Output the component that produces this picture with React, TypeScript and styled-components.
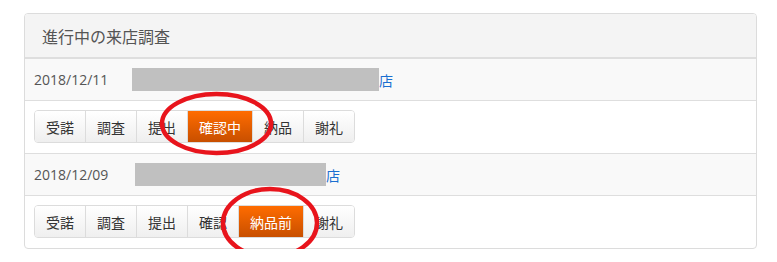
import React from "react";
import styled, { createGlobalStyle, css } from "styled-components";

const GlobalStyle = createGlobalStyle`
  body {
    margin: 0;
    background: #fff;
    font-family: "Open Sans", "Noto Sans CJK JP", sans-serif;
  }
`;

interface Visit {
  date: string;
  nameOffset: number;
  nameWidth: number;
  steps: string[];
  current: number;
  mark: { left: number; top: number; width: number; height: number };
}

const visits: Visit[] = [
  {
    date: "2018/12/11",
    nameOffset: 24,
    nameWidth: 247,
    steps: ["受諾", "調査", "提出", "確認中", "納品", "謝礼"],
    current: 3,
    mark: { left: 160, top: 92, width: 113, height: 63 },
  },
  {
    date: "2018/12/09",
    nameOffset: 27,
    nameWidth: 191,
    steps: ["受諾", "調査", "提出", "確認", "納品前", "謝礼"],
    current: 4,
    mark: { left: 221, top: 187, width: 98, height: 72 },
  },
];

const Page = styled.div`
  position: relative;
  padding: 13px 20px 0 24px;
`;

const Panel = styled.section`
  width: 731px;
  border: 1px solid #dcdcdc;
  border-radius: 4px;
  overflow: hidden;
`;

const Header = styled.h2`
  margin: 0;
  height: 43px;
  padding-left: 17px;
  display: flex;
  align-items: center;
  background: #f4f4f4;
  border-bottom: 2px solid #dedede;
  color: #555;
  font-size: 16px;
  font-weight: 400;
`;

const VisitHead = styled.div`
  height: 41px;
  display: flex;
  align-items: center;
  padding-left: 9px;
  background: #f9f9f9;
  border-bottom: 1px solid #dedede;
  font-size: 14px;
`;

const DateText = styled.span`
  color: #555;
  width: 74px;
`;

const Redacted = styled.span`
  display: inline-block;
  height: 23px;
  background: #c0c0c0;
`;

const ShopLink = styled.a`
  color: #1a6fd0;
  text-decoration: none;
  font-size: 14px;
`;

const StepRow = styled.div<{ $last: boolean }>`
  padding: 9px 9px 10px;
  ${(p) =>
    !p.$last &&
    css`
      border-bottom: 1px solid #dedede;
    `}
`;

const StepGroup = styled.div`
  display: inline-flex;
  border: 1px solid #dcdcdc;
  border-radius: 4px;
  overflow: hidden;
`;

const Step = styled.span<{ $active: boolean }>`
  height: 31px;
  padding: 0 11px;
  display: flex;
  align-items: center;
  font-size: 14px;
  color: #333;
  background: linear-gradient(#ffffff, #efefef);
  & + & {
    border-left: 1px solid #dcdcdc;
  }
  ${(p) =>
    p.$active &&
    css`
      color: #fff;
      background: linear-gradient(#ff6c00, #c84f00);
    `}
`;

const Marks = styled.svg`
  position: absolute;
  left: 0;
  top: 0;
  pointer-events: none;
`;

export default function App() {
  return (
    <Page>
      <GlobalStyle />
      <Panel>
        <Header>進行中の来店調査</Header>
        {visits.map((v, i) => (
          <React.Fragment key={v.date}>
            <VisitHead>
              <DateText>{v.date}</DateText>
              <Redacted style={{ marginLeft: v.nameOffset, width: v.nameWidth }} />
              <ShopLink href="#">店</ShopLink>
            </VisitHead>
            <StepRow $last={i === visits.length - 1}>
              <StepGroup>
                {v.steps.map((s, j) => (
                  <Step key={s} $active={j === v.current}>
                    {s}
                  </Step>
                ))}
              </StepGroup>
            </StepRow>
          </React.Fragment>
        ))}
      </Panel>
      <Marks width="777" height="262">
        {visits.map((v) => (
          <ellipse
            key={v.date}
            cx={v.mark.left + v.mark.width / 2}
            cy={v.mark.top + v.mark.height / 2}
            rx={v.mark.width / 2 - 2}
            ry={v.mark.height / 2 - 2}
            fill="none"
            stroke="#e8141c"
            strokeWidth="4.5"
          />
        ))}
      </Marks>
    </Page>
  );
}
